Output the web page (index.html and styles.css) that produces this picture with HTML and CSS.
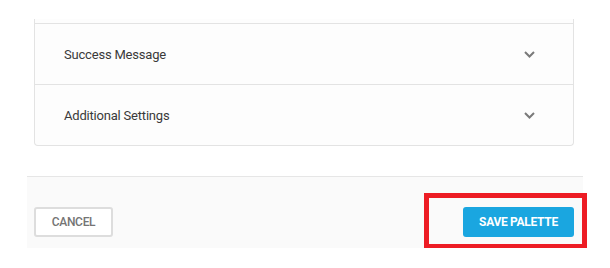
FILE: index.html
```html
<!DOCTYPE html>
<html>
<head>
<meta charset="utf-8">
<link rel="stylesheet" href="styles.css">
</head>
<body>
<div class="panel">
  <div class="row">
    <span class="row-title">Success Message</span>
    <svg class="chev" width="11" height="7" viewBox="0 0 11 7"><path d="M1 1 L5.5 5.5 L10 1" fill="none" stroke="#7a7a7a" stroke-width="2"/></svg>
  </div>
  <div class="row">
    <span class="row-title">Additional Settings</span>
    <svg class="chev" width="11" height="7" viewBox="0 0 11 7"><path d="M1 1 L5.5 5.5 L10 1" fill="none" stroke="#7a7a7a" stroke-width="2"/></svg>
  </div>
</div>
<div class="footer">
  <button class="btn btn-cancel">CANCEL</button>
  <button class="btn btn-save">SAVE PALETTE</button>
  <div class="highlight"></div>
</div>
</body>
</html>
```
FILE: styles.css
```css
* { box-sizing: border-box; }
body {
  margin: 0;
  background: #ffffff;
  font-family: Roboto, "Liberation Sans", Arial, sans-serif;
}
.panel {
  margin: 19px 0 0 34px;
  width: 540px;
  border: 1px solid #e3e3e3;
  border-top: none;
  border-radius: 0 0 4px 4px;
  padding-top: 4px;
  background: #fdfdfd;
}
.row {
  height: 61px;
  border-top: 1px solid #e3e3e3;
  display: flex;
  align-items: center;
  justify-content: space-between;
  padding: 0 38px 0 29px;
}
.row-title {
  font-size: 13px;
  letter-spacing: -0.2px;
  color: #3a3a3a;
}
.chev { display: block; margin-top: 1px; }
.footer {
  position: relative;
  margin: 30px 0 0 27px;
  width: 556px;
  height: 72px;
  border-top: 1px solid #e6e6e6;
  background: #fafafa;
  display: flex;
  justify-content: space-between;
  align-items: flex-start;
  padding: 30px 9px 0 7px;
}
.btn {
  height: 30px;
  border-radius: 3px;
  font-family: Roboto, "Liberation Sans", Arial, sans-serif;
  font-size: 12px;
  letter-spacing: -0.3px;
  cursor: pointer;
  padding: 0;
}
.btn-cancel {
  width: 79px;
  background: #ffffff;
  border: 2px solid #dddddd;
  color: #747474;
  font-weight: 500;
}
.btn-save {
  width: 111px;
  background: #1aa6e0;
  border: none;
  color: #ffffff;
  font-weight: 700;
}
.highlight {
  position: absolute;
  left: 397px;
  top: 16px;
  width: 163px;
  height: 56px;
  border: 5px solid #ed1c24;
  pointer-events: none;
}
```
